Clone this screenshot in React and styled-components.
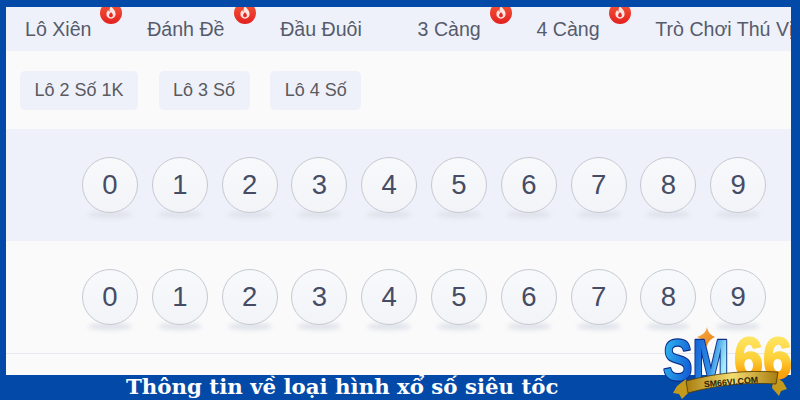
import React from "react";
import styled, { createGlobalStyle } from "styled-components";

const GlobalStyle = createGlobalStyle`
  html, body {
    margin: 0;
    padding: 0;
    width: 800px;
    height: 400px;
    overflow: hidden;
    background: #034aa8;
  }
`;

const Page = styled.div`
  position: relative;
  width: 800px;
  height: 400px;
  display: flex;
  flex-direction: column;
  background: #034aa8;
`;

const Board = styled.div`
  margin: 7px 9px 0 6px;
  height: 368px;
  display: flex;
  flex-direction: column;
  overflow: hidden;
  background: #fafafa;
  font-family: "Liberation Sans", Arial, sans-serif;
`;

const Tabs = styled.div`
  flex: none;
  height: 44px;
  padding-left: 19px;
  display: flex;
  align-items: center;
  gap: 55.7px;
  overflow: hidden;
  white-space: nowrap;
  background: #eef1f9;
`;

const Tab = styled.div`
  position: relative;
  flex: none;
  padding-top: 1px;
  font-size: 19.6px;
  color: #565b6c;
`;

const Hot = styled.svg`
  position: absolute;
  left: calc(100% + 9px);
  top: -15px;
  width: 22px;
  height: 22px;
`;

const SubTabs = styled.div`
  flex: none;
  height: 78px;
  padding: 20px 0 0 14px;
  box-sizing: border-box;
  display: flex;
  align-items: flex-start;
  gap: 20.5px;
`;

const SubTab = styled.div`
  height: 39px;
  padding: 0 14.5px;
  display: flex;
  align-items: center;
  border-radius: 5px;
  background: #eef1f9;
  font-size: 18px;
  color: #5a5a5f;
`;

const BallRow = styled.div`
  flex: none;
  height: ${(p) => p.$height}px;
  padding: ${(p) => p.$top}px 0 0 76px;
  box-sizing: border-box;
  background: ${(p) => (p.$shaded ? "#eef1f9" : "#fafafa")};
  border-bottom: ${(p) => (p.$line ? "1px solid #e6e8ef" : "none")};
`;

const Balls = styled.div`
  position: relative;
  z-index: 0;
  display: flex;
  gap: 13.8px;
`;

const Ball = styled.div`
  position: relative;
  flex: none;
  width: 56px;
  height: 56px;
  box-sizing: border-box;
  display: flex;
  align-items: center;
  justify-content: center;
  border-radius: 50%;
  border: 1px solid #c6c9d3;
  background: linear-gradient(180deg, #f8f9fb 0%, #f2f4f8 100%);
  font-size: 27.5px;
  color: #454c63;

  &::before {
    content: "";
    position: absolute;
    left: 5px;
    right: 5px;
    bottom: -6px;
    height: 7px;
    border-radius: 50%;
    background: #dfe2ea;
    filter: blur(2px);
    z-index: -1;
  }
`;

const Caption = styled.div`
  height: 25px;
  padding-left: 126px;
  font-family: "DejaVu Serif", serif;
  font-weight: bold;
  font-size: 21.3px;
  line-height: 23px;
  color: #ffffff;
  white-space: nowrap;
`;

const Logo = styled.svg`
  position: absolute;
  left: 660px;
  top: 324px;
  width: 134px;
  height: 76px;
`;

const tabs = [
  { name: "Lô Xiên", hot: true },
  { name: "Đánh Đề", hot: true },
  { name: "Đầu Đuôi" },
  { name: "3 Càng", hot: true },
  { name: "4 Càng", hot: true },
  { name: "Trò Chơi Thú Vị" },
];

const subTabs = ["Lô 2 Số 1K", "Lô 3 Số", "Lô 4 Số"];
const digits = [0, 1, 2, 3, 4, 5, 6, 7, 8, 9];

function HotIcon() {
  return (
    <Hot viewBox="0 0 22 22">
      <defs>
        <linearGradient id="hotFill" x1="0" y1="0" x2="0" y2="1">
          <stop offset="0" stopColor="#f4593a" />
          <stop offset="1" stopColor="#e3201f" />
        </linearGradient>
      </defs>
      <circle cx="11" cy="11" r="11" fill="url(#hotFill)" />
      <path
        d="M11 3.5c.6 2.4 4.6 4.4 4.6 8.6 0 2.8-2 4.6-4.6 4.6s-4.6-1.800-4.600-4.600c0-2 1-3.200 1.900-4.200.2 1 .7 1.600 1.300 1.800C9.300 7.600 10 5.400 11 3.500z"
        fill="#fde6df"
      />
      <path
        d="M11 10c.5 1 1.900 1.800 1.900 3.400 0 1.100-.9 1.900-1.900 1.900s-1.900-.8-1.900-1.900C9.100 11.800 10.500 11 11 10z"
        fill="#e8282a"
      />
    </Hot>
  );
}

function BrandLogo() {
  return (
    <Logo viewBox="0 0 134 76">
      <defs>
        <linearGradient id="smFill" x1="0" y1="0" x2="1" y2="0.2">
          <stop offset="0" stopColor="#35c3f3" />
          <stop offset="0.5" stopColor="#1462d6" />
          <stop offset="0.8" stopColor="#2f8fe6" />
          <stop offset="1" stopColor="#a5ecf8" />
        </linearGradient>
        <linearGradient id="sixFill" x1="0" y1="0" x2="0" y2="1">
          <stop offset="0" stopColor="#fff07a" />
          <stop offset="0.5" stopColor="#fdd13a" />
          <stop offset="0.72" stopColor="#fba60e" />
          <stop offset="1" stopColor="#f59203" />
        </linearGradient>
        <linearGradient id="ribbonFill" x1="0" y1="0" x2="1" y2="0">
          <stop offset="0" stopColor="#a87d10" />
          <stop offset="0.5" stopColor="#f5dd72" />
          <stop offset="1" stopColor="#a87d10" />
        </linearGradient>
        <linearGradient id="starFill" x1="0" y1="0" x2="1" y2="1">
          <stop offset="0" stopColor="#f9b04a" />
          <stop offset="1" stopColor="#e87f14" />
        </linearGradient>
      </defs>
      <path d="M47 3c1 6 4 8 8 10-4 2-7 4-8 10-2-6-5-8-10-10 5-2 9-4 10-10z" fill="url(#starFill)" />
      <text
        transform="translate(3 56) scale(0.76 1)"
        fontFamily="'Liberation Sans', sans-serif"
        fontWeight="bold"
        fontSize="58"
        fill="url(#smFill)"
        stroke="#0b2f8a"
        strokeWidth="2.500"
        strokeLinejoin="round"
        paintOrder="stroke"
      >
        SM
      </text>
      <circle cx="87" cy="42" r="6" fill="#ffffff" />
      <circle cx="116" cy="42" r="6" fill="#ffffff" />
      <text
        transform="translate(74 54) scale(0.9 1)"
        fontFamily="'Liberation Sans', sans-serif"
        fontWeight="bold"
        fontSize="58"
        fill="url(#sixFill)"
        stroke="url(#sixFill)"
        strokeWidth="2"
        strokeLinejoin="round"
      >
        66
      </text>
      <path d="M17 62l9-7 3 13-7 7-3-5-6-1z" fill="#c39a1c" />
      <path d="M123 58l-9-7-2 13 7 8 2-5 6-2z" fill="#c39a1c" />
      <path d="M26 57c30-8 60-11 92-9l-2 12c-30-2-60 1-88 9z" fill="url(#ribbonFill)" stroke="#4a3706" strokeWidth="0.800" />
      <text
        x="71"
        y="61"
        textAnchor="middle"
        fontFamily="'Liberation Sans', sans-serif"
        fontWeight="bold"
        fontSize="8.800"
        fill="#2a1e05"
        transform="rotate(-5 71 58)"
      >
        SM66VI.COM
      </text>
    </Logo>
  );
}

export default function App() {
  return (
    <>
      <GlobalStyle />
      <Page>
        <Board>
          <Tabs>
            {tabs.map((tab) => (
              <Tab key={tab.name}>
                {tab.name}
                {tab.hot && <HotIcon />}
              </Tab>
            ))}
          </Tabs>
          <SubTabs>
            {subTabs.map((name) => (
              <SubTab key={name}>{name}</SubTab>
            ))}
          </SubTabs>
          <BallRow $height={112} $top={28} $shaded>
            <Balls>
              {digits.map((d) => (
                <Ball key={d}>{d}</Ball>
              ))}
            </Balls>
          </BallRow>
          <BallRow $height={113} $top={28} $line>
            <Balls>
              {digits.map((d) => (
                <Ball key={d}>{d}</Ball>
              ))}
            </Balls>
          </BallRow>
        </Board>
        <Caption>Thông tin về loại hình xổ số siêu tốc</Caption>
        <BrandLogo />
      </Page>
    </>
  );
}
